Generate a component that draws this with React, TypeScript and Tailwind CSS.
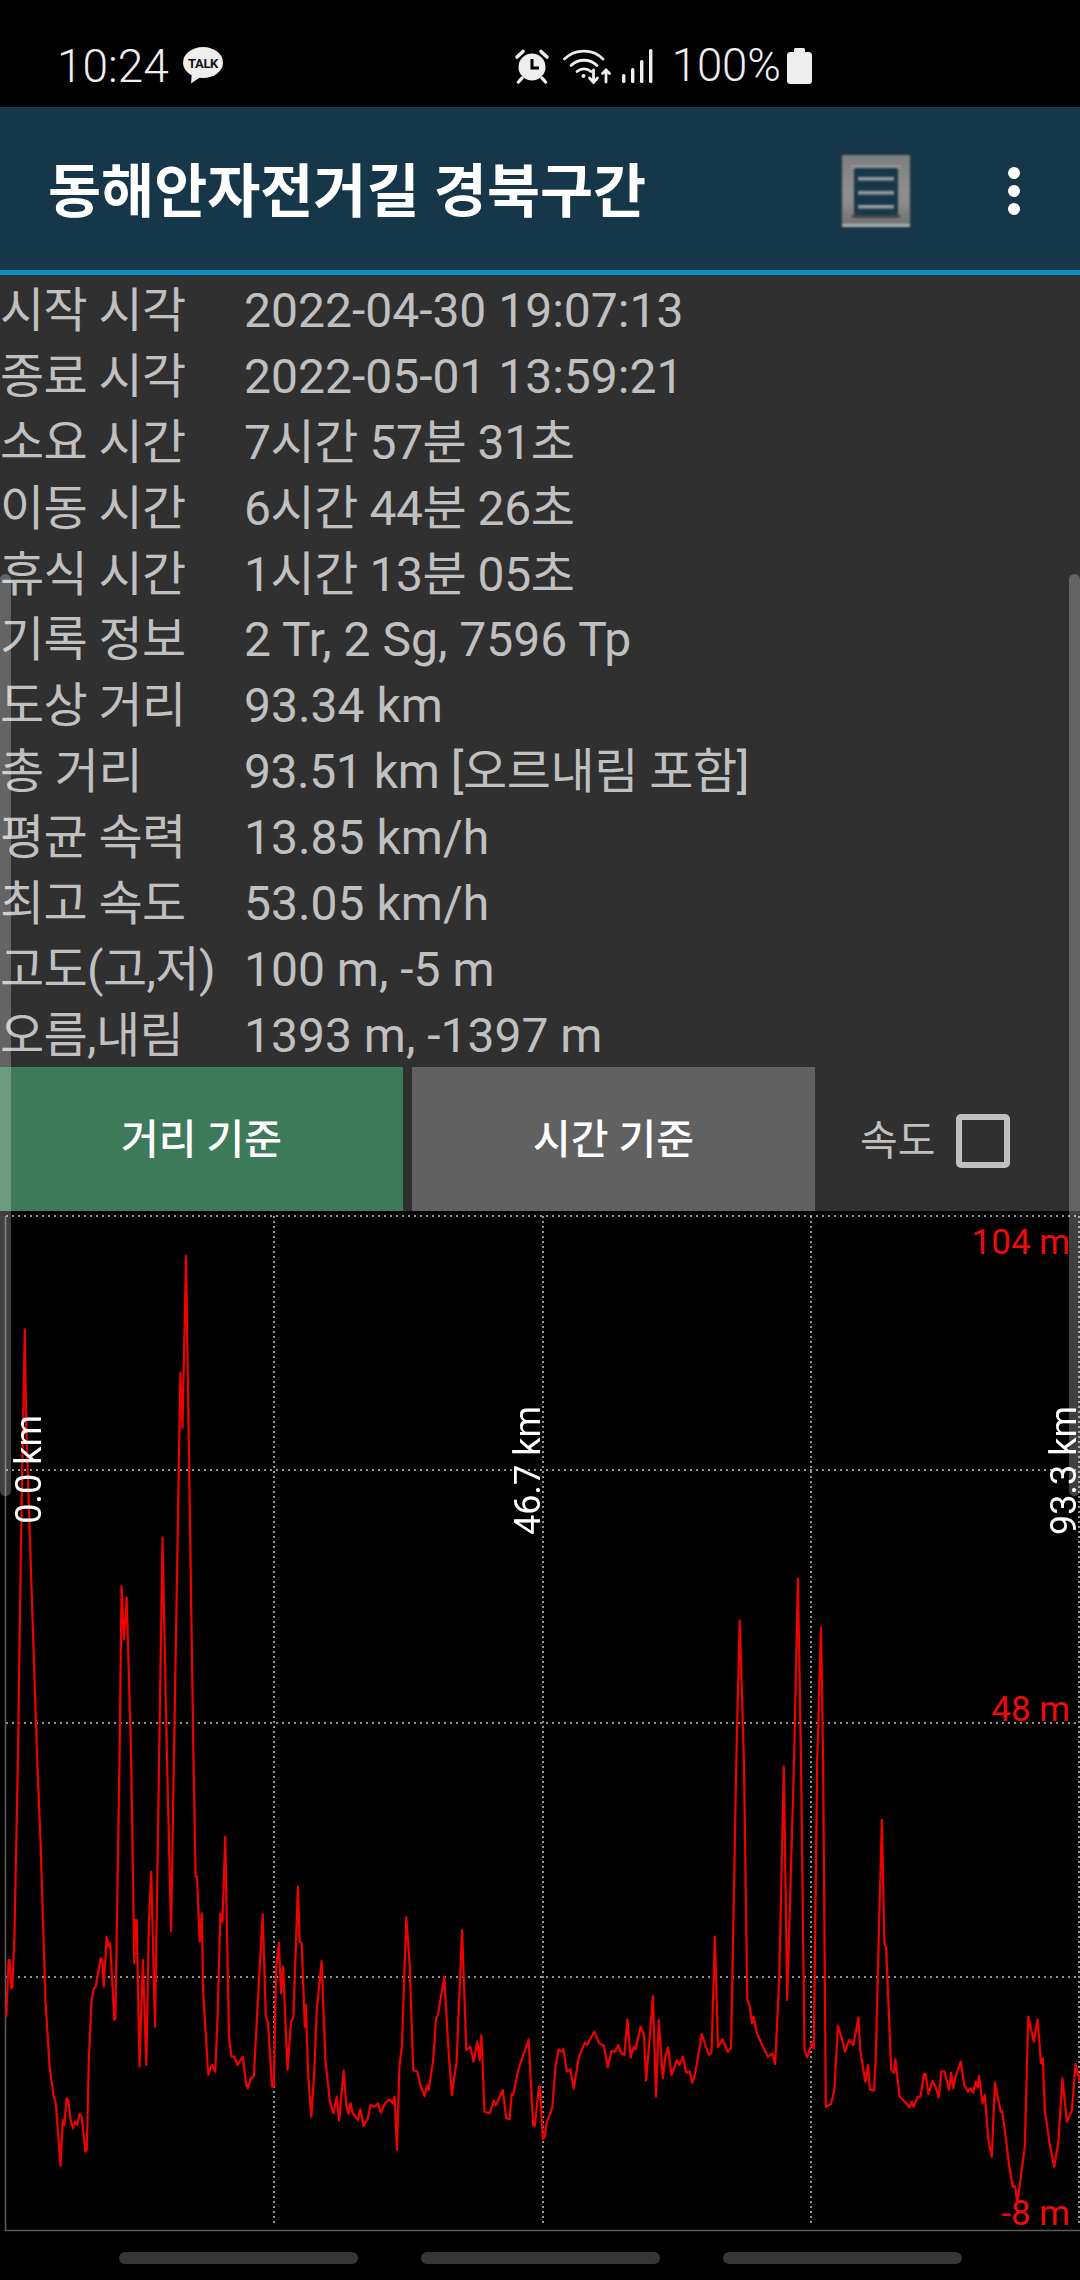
const A: number[][] = [[18,770],[25,600],[28,600],[33,685],[36,680],[42,520],[52,0],[62,-720],[72,-1292],[76,-1000],[85,-720],[108,0],[118,250],[132,725],[144,920],[156,1010],[162,1030],[176,1218],[182,1080],[187,1095],[193,1015],[198,1020],[205,1080],[212,1105],[218,1085],[224,1095],[231,1062],[237,1068],[248,1175],[252,1170],[258,900],[266,720],[272,688],[278,680],[292,595],[297,600],[301,680],[310,530],[316,560],[320,550],[332,780],[335,775],[347,0],[353,-521],[360,-362],[368,-487],[381,0],[390,610],[393,480],[397,480],[405,920],[415,600],[425,915],[432,500],[439,335],[450,800],[462,0],[472,-667],[485,0],[497,515],[505,0],[524,-1162],[530,-997],[540,-1512],[562,0],[568,350],[572,350],[580,545],[586,460],[590,700],[605,945],[615,915],[625,935],[632,770],[640,460],[646,485],[654,230],[665,830],[672,890],[680,890],[690,915],[705,890],[715,975],[720,985],[728,955],[737,950],[750,700],[763,462],[772,770],[778,785],[790,980],[795,980],[802,620],[810,548],[816,700],[822,620],[835,930],[845,785],[852,770],[865,380],[870,545],[876,550],[885,800],[888,735],[895,950],[904,1070],[912,950],[920,750],[934,603],[945,900],[958,1025],[968,1060],[978,1010],[985,1082],[998,932],[1006,1040],[1012,1062],[1018,1030],[1024,1060],[1040,1080],[1046,1048],[1056,1098],[1068,1075],[1076,1035],[1088,1040],[1098,1030],[1106,1058],[1118,1030],[1130,1018],[1140,1030],[1146,1010],[1153,1170],[1160,920],[1167,860],[1180,472],[1190,620],[1200,930],[1212,935],[1222,980],[1233,1008],[1240,975],[1245,990],[1258,900],[1266,775],[1272,765],[1290,650],[1302,860],[1312,1005],[1326,905],[1342,510],[1354,870],[1366,860],[1375,905],[1386,845],[1393,900],[1398,825],[1407,1055],[1422,1060],[1434,1022],[1440,1035],[1460,990],[1470,1075],[1480,1078],[1486,1002],[1490,1005],[1505,930],[1518,890],[1525,870],[1535,838],[1548,1095],[1553,1098],[1565,980]];
const B: number[][] = [[0,980],[8,1138],[14,1130],[20,1085],[30,1060],[36,1040],[45,920],[54,868],[62,875],[68,868],[78,935],[88,928],[98,985],[113,890],[130,848],[137,855],[145,838],[158,815],[172,850],[186,858],[197,922],[208,872],[218,875],[227,855],[235,880],[245,885],[254,778],[263,893],[272,860],[278,868],[292,800],[302,825],[308,962],[318,840],[328,708],[337,1010],[345,780],[357,955],[364,890],[372,862],[382,945],[398,900],[405,915],[415,890],[425,938],[435,935],[442,968],[450,945],[470,822],[490,885],[498,878],[508,530],[517,862],[530,838],[545,875],[555,865],[570,0],[580,-419],[592,0],[602,720],[608,735],[616,790],[620,770],[630,820],[645,855],[662,890],[675,880],[683,912],[695,650],[708,20],[718,720],[738,0],[749,-544],[758,0],[768,870],[776,892],[790,848],[795,865],[805,0],[816,-398],[822,0],[830,1040],[845,1032],[855,990],[865,797],[875,830],[886,875],[898,840],[910,855],[925,772],[930,870],[945,965],[953,915],[958,988],[970,992],[975,900],[985,480],[993,180],[1000,550],[1005,560],[1020,930],[1028,938],[1032,897],[1044,1010],[1060,1025],[1073,1042],[1080,1025],[1085,1040],[1097,1010],[1105,1010],[1115,942],[1120,942],[1128,1002],[1140,962],[1150,985],[1158,1012],[1165,935],[1175,935],[1188,990],[1194,938],[1200,985],[1208,945],[1222,905],[1232,975],[1243,995],[1250,985],[1258,998],[1265,965],[1272,982],[1275,948],[1285,1030],[1292,1005],[1302,1140],[1312,1190],[1321,968],[1338,1055],[1342,1052],[1352,1130],[1362,1215],[1373,1280],[1380,1280],[1386,1330],[1395,1260],[1408,1160],[1418,770],[1434,845],[1445,778],[1455,910],[1460,895],[1466,1050],[1480,1150],[1493,1220],[1505,1150],[1517,955],[1530,1085],[1545,1050],[1555,912],[1568,965]];
const CHART_TOP = 1211;
const pts = [...A.map(([x, y]) => [x / 2.904, 1760 + y / 3]), ...B.map(([x, y]) => [540 + x / 2.904, 1760 + y / 3])]
  .map(([x, y]) => `${x.toFixed(1)},${(y - CHART_TOP).toFixed(1)}`)
  .join(" ");

const rows: [string, string][] = [
  ["시작 시각", "2022-04-30 19:07:13"],
  ["종료 시각", "2022-05-01 13:59:21"],
  ["소요 시간", "7시간 57분 31초"],
  ["이동 시간", "6시간 44분 26초"],
  ["휴식 시간", "1시간 13분 05초"],
  ["기록 정보", "2 Tr, 2 Sg, 7596 Tp"],
  ["도상 거리", "93.34 km"],
  ["총 거리", "93.51 km [오르내림 포함]"],
  ["평균 속력", "13.85 km/h"],
  ["최고 속도", "53.05 km/h"],
  ["고도(고,저)", "100 m, -5 m"],
  ["오름,내림", "1393 m, -1397 m"],
];

const FONT = "font-['Roboto','Noto_Sans_CJK_KR',sans-serif]";

function Alarm() {
  return (
    <svg width="36" height="36" viewBox="0 0 36 36" fill="#eeeeee">
      <circle cx="18" cy="19" r="13.5" />
      <path d="M3 9 L9 3.5" stroke="#eeeeee" strokeWidth="3.6" strokeLinecap="round" />
      <path d="M33 9 L27 3.5" stroke="#eeeeee" strokeWidth="3.6" strokeLinecap="round" />
      <path d="M8 30 L4.5 34 M28 30 L31.5 34" stroke="#eeeeee" strokeWidth="3.4" strokeLinecap="round" />
      <path d="M18 11 V20 H25" stroke="#000" strokeWidth="3" fill="none" />
    </svg>
  );
}

function Wifi() {
  return (
    <svg width="48" height="36" viewBox="0 0 48 36" fill="none" stroke="#eeeeee" strokeWidth="2.8" strokeLinecap="round">
      <path d="M1.5 11 C12 0.5 30 0.5 40 11" />
      <path d="M8 17.5 C15 10.5 27 10.5 34 17.5" />
      <path d="M14 23.5 C18 20 24 20 28 23.5" />
      <circle cx="20.5" cy="28" r="2" fill="#eeeeee" stroke="none" />
      <path d="M30.5 22 V34 M26.5 30 L30.5 34.5 L34.5 30" />
      <path d="M43 34 V22 M39.5 25.5 L43 22 L46.5 25.5" />
    </svg>
  );
}

function Signal() {
  return (
    <svg width="33" height="36" viewBox="0 0 33 36" fill="#eeeeee">
      <rect x="1" y="26" width="3.4" height="9" rx="1.5" />
      <rect x="10" y="20" width="3.4" height="15" rx="1.5" />
      <rect x="19" y="12" width="3.4" height="23" rx="1.5" />
      <rect x="28" y="1" width="3.4" height="34" rx="1.5" />
    </svg>
  );
}

function Battery() {
  return (
    <svg width="25" height="36" viewBox="0 0 25 36" fill="#eeeeee">
      <rect x="7" y="0" width="11" height="6" rx="1.5" />
      <rect x="0" y="4" width="25" height="32" rx="3.5" />
    </svg>
  );
}

function Talk() {
  return (
    <svg width="40" height="37" viewBox="0 0 40 37">
      <ellipse cx="20" cy="15.5" rx="20" ry="15.5" fill="#eeeeee" />
      <path d="M9 25 L8 36.5 L19 29 Z" fill="#eeeeee" />
      <text x="20" y="21" textAnchor="middle" fontSize="13" fontWeight="700" fill="#111" fontFamily="Roboto, sans-serif" letterSpacing="-0.4">TALK</text>
    </svg>
  );
}

function ListIcon() {
  return (
    <svg width="68" height="72" viewBox="0 0 68 72" style={{ filter: "blur(1px)" }}>
      <defs>
        <linearGradient id="fr" x1="0" y1="0" x2="0" y2="1">
          <stop offset="0" stopColor="#7f7f7f" />
          <stop offset="0.6" stopColor="#8f8f8f" />
          <stop offset="1" stopColor="#707070" />
        </linearGradient>
      </defs>
      <rect width="68" height="72" fill="url(#fr)" />
      <rect y="69" width="68" height="3" fill="#b5b5b5" />
      <rect x="10" y="11" width="48" height="2" fill="#a0a0a0" />
      <rect x="10" y="60" width="48" height="3" fill="#454545" />
      <rect x="12" y="13" width="44" height="47" rx="1" fill="#16364a" />
      <rect x="16" y="22" width="36" height="3.5" fill="#a0a0a0" />
      <rect x="16" y="36" width="36" height="3.5" fill="#a0a0a0" />
      <rect x="16" y="50" width="36" height="3.5" fill="#a0a0a0" />
    </svg>
  );
}

function Chart() {
  const w = 1080;
  const h = 1069;
  const hs = [5, 259, 512, 766];
  const vs = [274, 543, 811, 1079];
  return (
    <svg width={w} height={h} viewBox={`0 0 ${w} ${h}`} className="absolute left-0 top-0">
      {hs.map((y) => (
        <line key={y} x1="6" x2={w} y1={y} y2={y} stroke="#c4c4c4" strokeWidth="1.5" strokeDasharray="2 4" />
      ))}
      {vs.map((x) => (
        <line key={x} x1={x} x2={x} y1="5" y2="1014" stroke="#c4c4c4" strokeWidth="1.5" strokeDasharray="2 3" />
      ))}
      <path d="M5.5 5 V1019.5 H1080" fill="none" stroke="#5a5a5a" strokeWidth="1.6" />
      <polyline points={pts} fill="none" stroke="#f00000" strokeWidth="2.2" strokeLinejoin="round" />
    </svg>
  );
}

function VLabel({ text, className }: { text: string; className: string }) {
  return (
    <div className={`absolute text-[36px] leading-[30px] text-white whitespace-nowrap [writing-mode:vertical-rl] rotate-180 ${className}`}>
      {text}
    </div>
  );
}

function RLabel({ text, className }: { text: string; className: string }) {
  return (
    <div className={`absolute right-[10px] text-[35px] leading-none text-[#ee0a0a] whitespace-nowrap ${className}`}>
      {text}
    </div>
  );
}

export default function App() {
  return (
    <div className={`relative w-[1080px] h-[2280px] overflow-hidden bg-black ${FONT}`}>
      <div className="h-[107px] flex items-center justify-between pt-[24px] pl-[57px] pr-[268px]">
        <div className="flex items-center gap-[14px]">
          <span className="text-[46px] leading-none text-[#eeeeee] font-light">10:24</span>
          <Talk />
        </div>
        <div className="flex items-center">
          <Alarm />
          <div className="ml-[13px]"><Wifi /></div>
          <div className="ml-[10px]"><Signal /></div>
          <span className="ml-[18px] text-[45.5px] leading-none text-[#eeeeee] font-light">100%</span>
          <div className="ml-[6px]"><Battery /></div>
        </div>
      </div>

      <div className="h-[163px] bg-[#16364a] flex items-center pl-[48px] pr-[60px]">
        <div className="flex-1 text-[57.7px] leading-none font-bold text-white whitespace-nowrap pt-[9px]">동해안자전거길 경북구간</div>
        <div className="mr-[98px] mt-[4px]"><ListIcon /></div>
        <div className="flex flex-col gap-[6px] mt-[4px]">
          <div className="w-[12px] h-[12px] rounded-full bg-white" />
          <div className="w-[12px] h-[12px] rounded-full bg-white" />
          <div className="w-[12px] h-[12px] rounded-full bg-white" />
        </div>
      </div>
      <div className="h-[5px] bg-[#0e8fc5]" />

      <div className="h-[936px] bg-[#303030] flex flex-col">
        <div className="h-[792px] pt-[3px]">
          {rows.map(([k, v]) => (
            <div key={k} className="grid grid-cols-[244px_1fr] h-[65.9px] items-center text-[48px] leading-none text-[#c0c0c0] whitespace-nowrap">
              <div className="tracking-[-0.6px]">{k}</div>
              <div className={/[가-힣]/.test(v) ? "tracking-[-0.45px]" : ""}>{v}</div>
            </div>
          ))}
        </div>
        <div className="h-[144px] flex">
          <div className="w-[403px] bg-[#3c7a59] flex items-center justify-center pt-[4px] text-[41px] font-medium text-white">거리 기준</div>
          <div className="ml-[9px] w-[403px] bg-[#616161] flex items-center justify-center pt-[4px] text-[41px] font-medium text-white">시간 기준</div>
          <div className="flex-1 flex items-center pl-[45px]">
            <span className="text-[41px] leading-none text-[#c0c0c0] mt-[4px]">속도</span>
            <div className="ml-[21px] w-[54px] h-[54px] mt-[4px] rounded-[5px] border-[6px] border-[#c0c0c0]" />
          </div>
        </div>
      </div>

      <div className="relative h-[1069px] bg-black">
        <Chart />
        <VLabel text="0.0 km" className="left-[14px] top-[204px]" />
        <VLabel text="46.7 km" className="left-[513px] top-[195px]" />
        <VLabel text="93.3 km" className="left-[1049px] top-[195px]" />
        <RLabel text="104 m" className="top-[14px]" />
        <RLabel text="48 m" className="top-[481px]" />
        <RLabel text="-8 m" className="top-[985px]" />
      </div>

      <div className="absolute left-0 top-[574px] w-[11px] h-[922px] rounded-[6px] bg-white/25" />
      <div className="absolute right-0 top-[574px] w-[11px] h-[922px] rounded-[6px] bg-white/25" />

      <div className="absolute left-0 right-0 top-[2252px] flex justify-center gap-[63px]">
        <div className="w-[239px] h-[12px] rounded-full bg-[#363636]" />
        <div className="w-[239px] h-[12px] rounded-full bg-[#363636]" />
        <div className="w-[239px] h-[12px] rounded-full bg-[#363636]" />
      </div>
    </div>
  );
}
